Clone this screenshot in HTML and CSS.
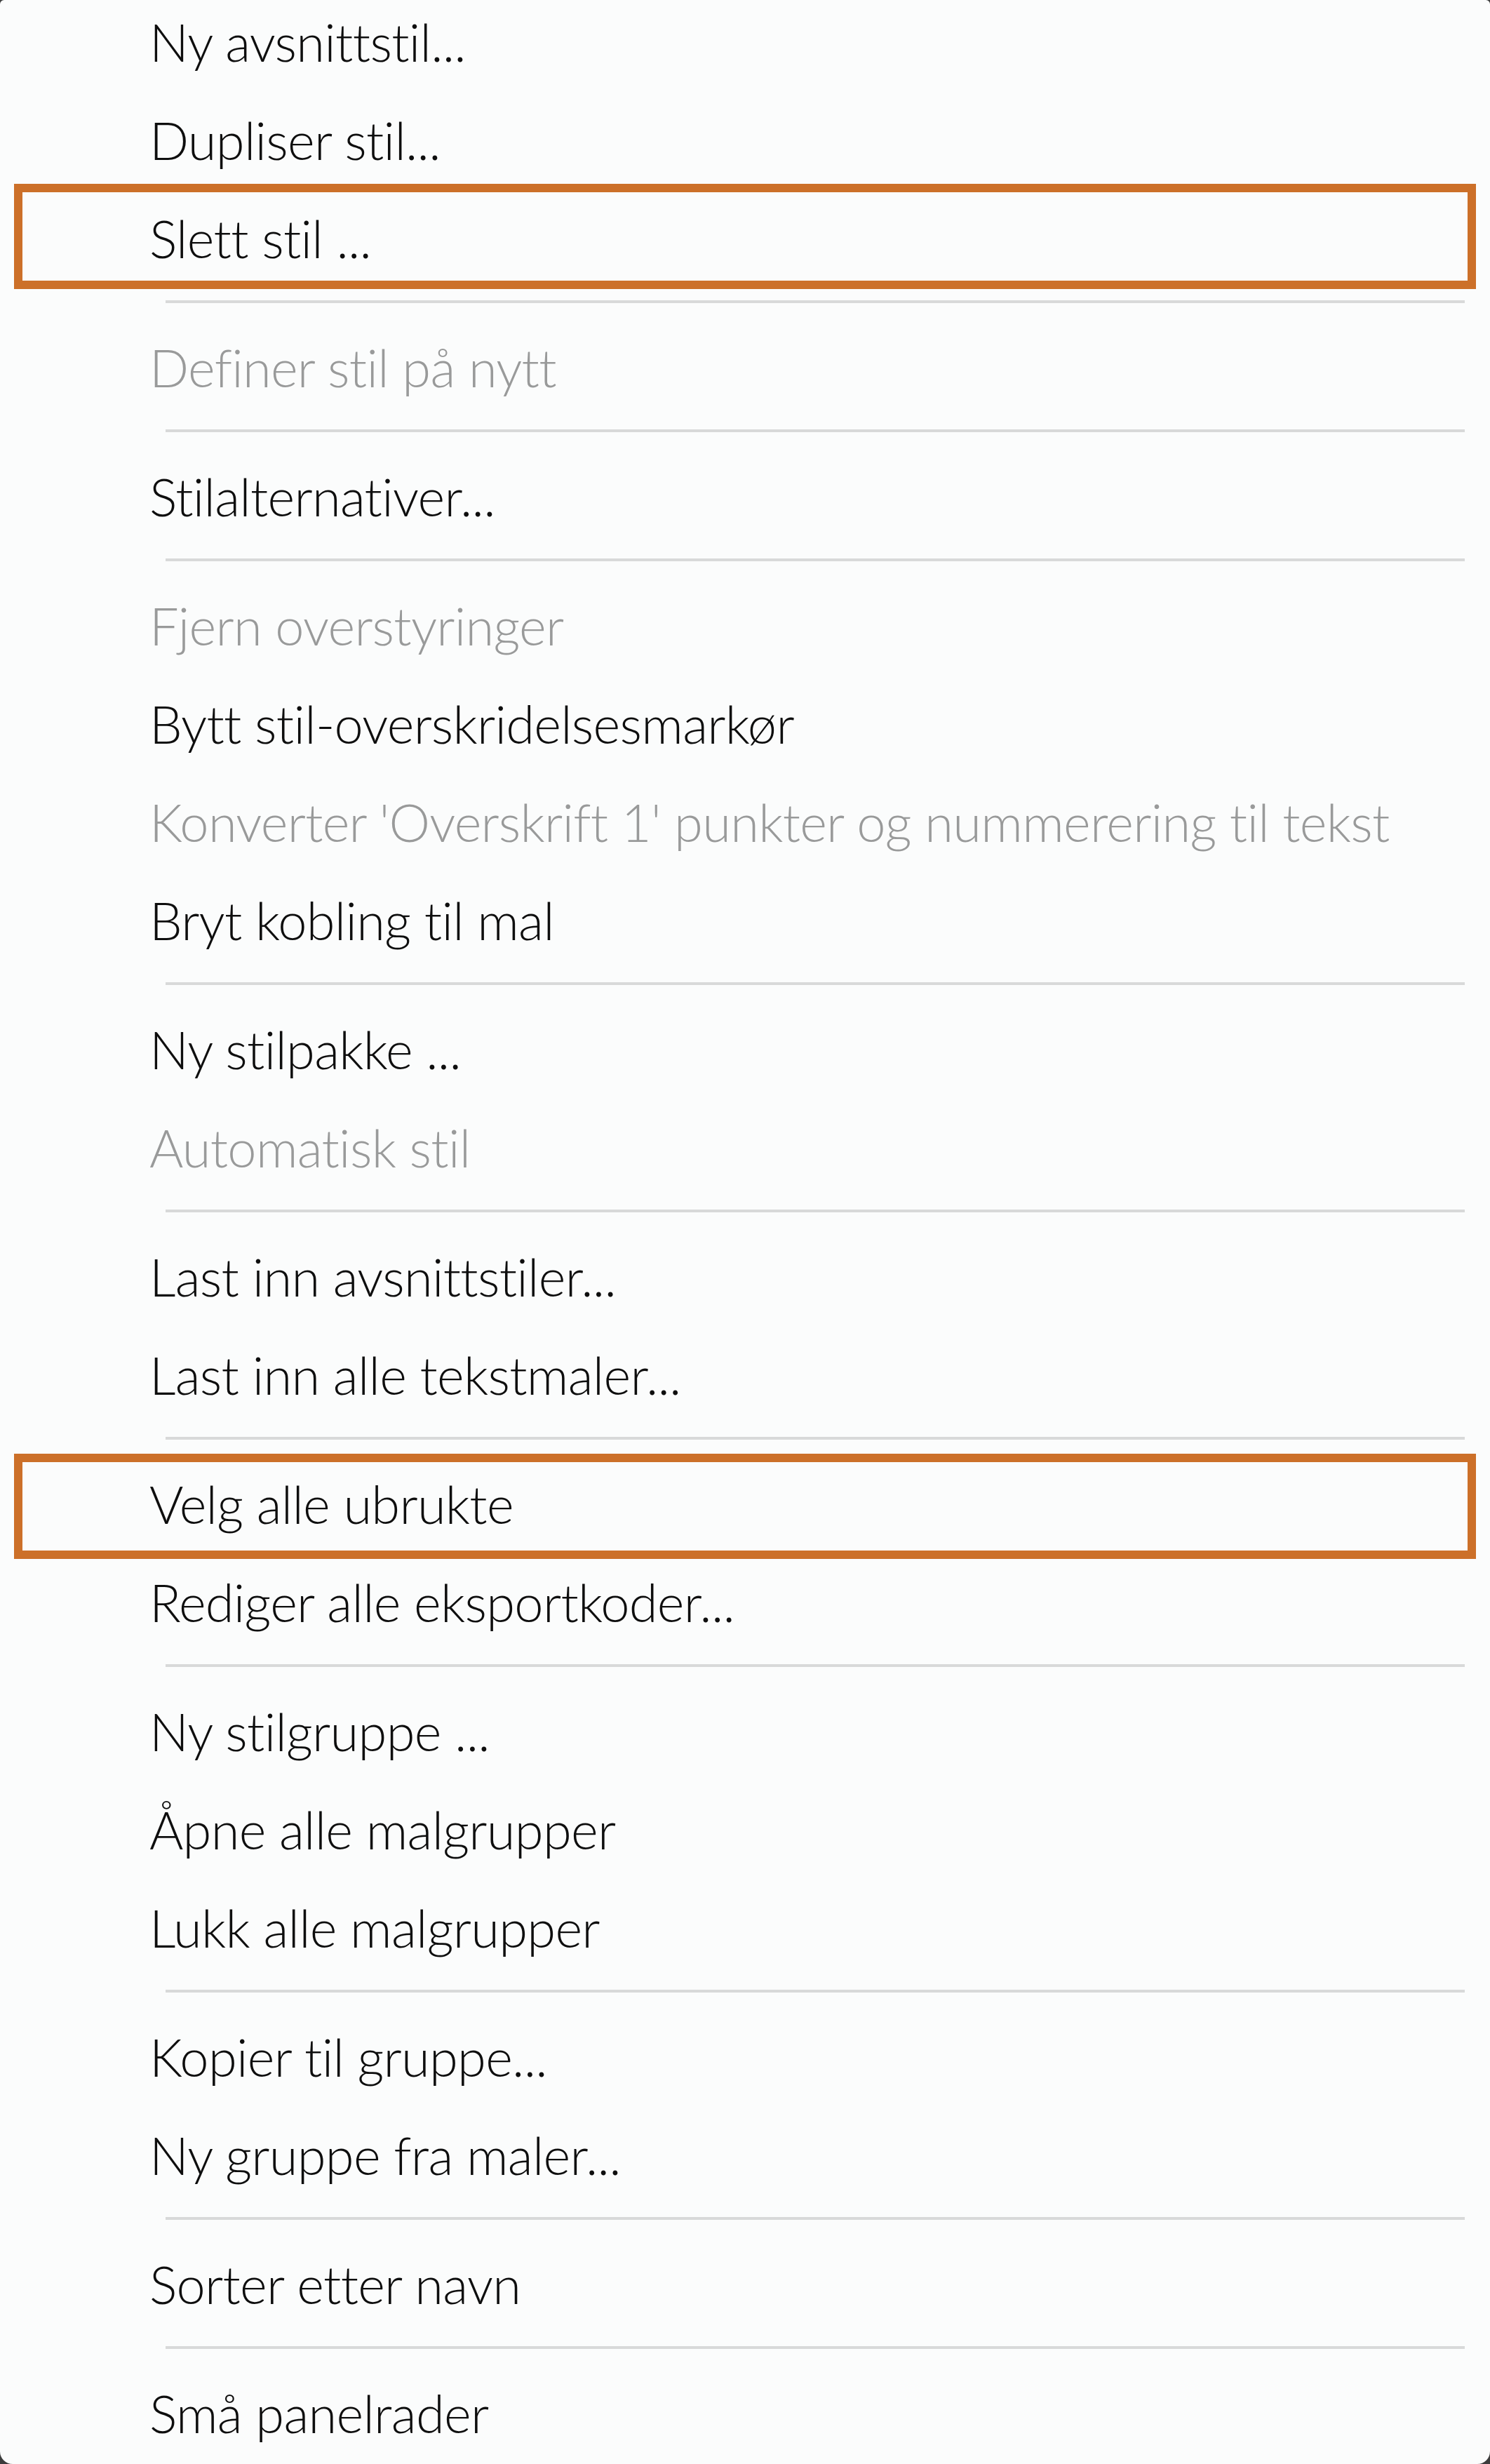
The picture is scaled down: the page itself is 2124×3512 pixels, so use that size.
FILE: index.html
```html
<!DOCTYPE html>
<html lang="no">
<head>
<meta charset="utf-8">
<title>Avsnittstiler meny</title>
<link rel="stylesheet" href="styles.css">
</head>
<body>
<div class="menu">
  <div class="item">Ny avsnittstil...</div>
  <div class="item">Dupliser stil...</div>
  <div class="item item--marked-a">Slett stil ...</div>
  <div class="sep"></div>
  <div class="item item--disabled">Definer stil på nytt</div>
  <div class="sep"></div>
  <div class="item">Stilalternativer...</div>
  <div class="sep"></div>
  <div class="item item--disabled">Fjern overstyringer</div>
  <div class="item">Bytt stil-overskridelsesmarkør</div>
  <div class="item item--disabled">Konverter 'Overskrift 1' punkter og nummerering til tekst</div>
  <div class="item">Bryt kobling til mal</div>
  <div class="sep"></div>
  <div class="item">Ny stilpakke ...</div>
  <div class="item item--disabled">Automatisk stil</div>
  <div class="sep"></div>
  <div class="item">Last inn avsnittstiler...</div>
  <div class="item">Last inn alle tekstmaler...</div>
  <div class="sep"></div>
  <div class="item item--marked-b">Velg alle ubrukte</div>
  <div class="item">Rediger alle eksportkoder...</div>
  <div class="sep"></div>
  <div class="item">Ny stilgruppe ...</div>
  <div class="item">Åpne alle malgrupper</div>
  <div class="item">Lukk alle malgrupper</div>
  <div class="sep"></div>
  <div class="item">Kopier til gruppe...</div>
  <div class="item">Ny gruppe fra maler...</div>
  <div class="sep"></div>
  <div class="item">Sorter etter navn</div>
  <div class="sep"></div>
  <div class="item">Små panelrader</div>
</div>
</body>
</html>
```

FILE: styles.css
```css
html, body {
  margin: 0;
  padding: 0;
  background: #3c3c3c;
}

.menu {
  width: 2124px;
  height: 3512px;
  overflow: hidden;
  background: #fbfcfc;
  border-radius: 6px 6px 18px 18px;
  font-family: Lato, "Noto Sans", sans-serif;
  font-weight: 300;
  font-size: 74px;
  letter-spacing: -0.7px;
  color: #0e0e0e;
}

.item {
  position: relative;
  height: 120px;
  line-height: 120px;
  padding: 0 0 20px 213px;
  white-space: nowrap;
}

.item--disabled {
  color: #999a9a;
}

.item--marked-a::after,
.item--marked-b::after {
  content: "";
  position: absolute;
  left: 20px;
  right: 20px;
  border: 12px solid #cc7029;
  pointer-events: none;
}

.item--marked-a::after {
  top: -18px;
  bottom: 8px;
}

.item--marked-b::after {
  top: -12px;
  bottom: 2px;
}

.sep {
  height: 4px;
  margin: 8px 36px 32px 236px;
  background: #d8d9d9;
}
```
